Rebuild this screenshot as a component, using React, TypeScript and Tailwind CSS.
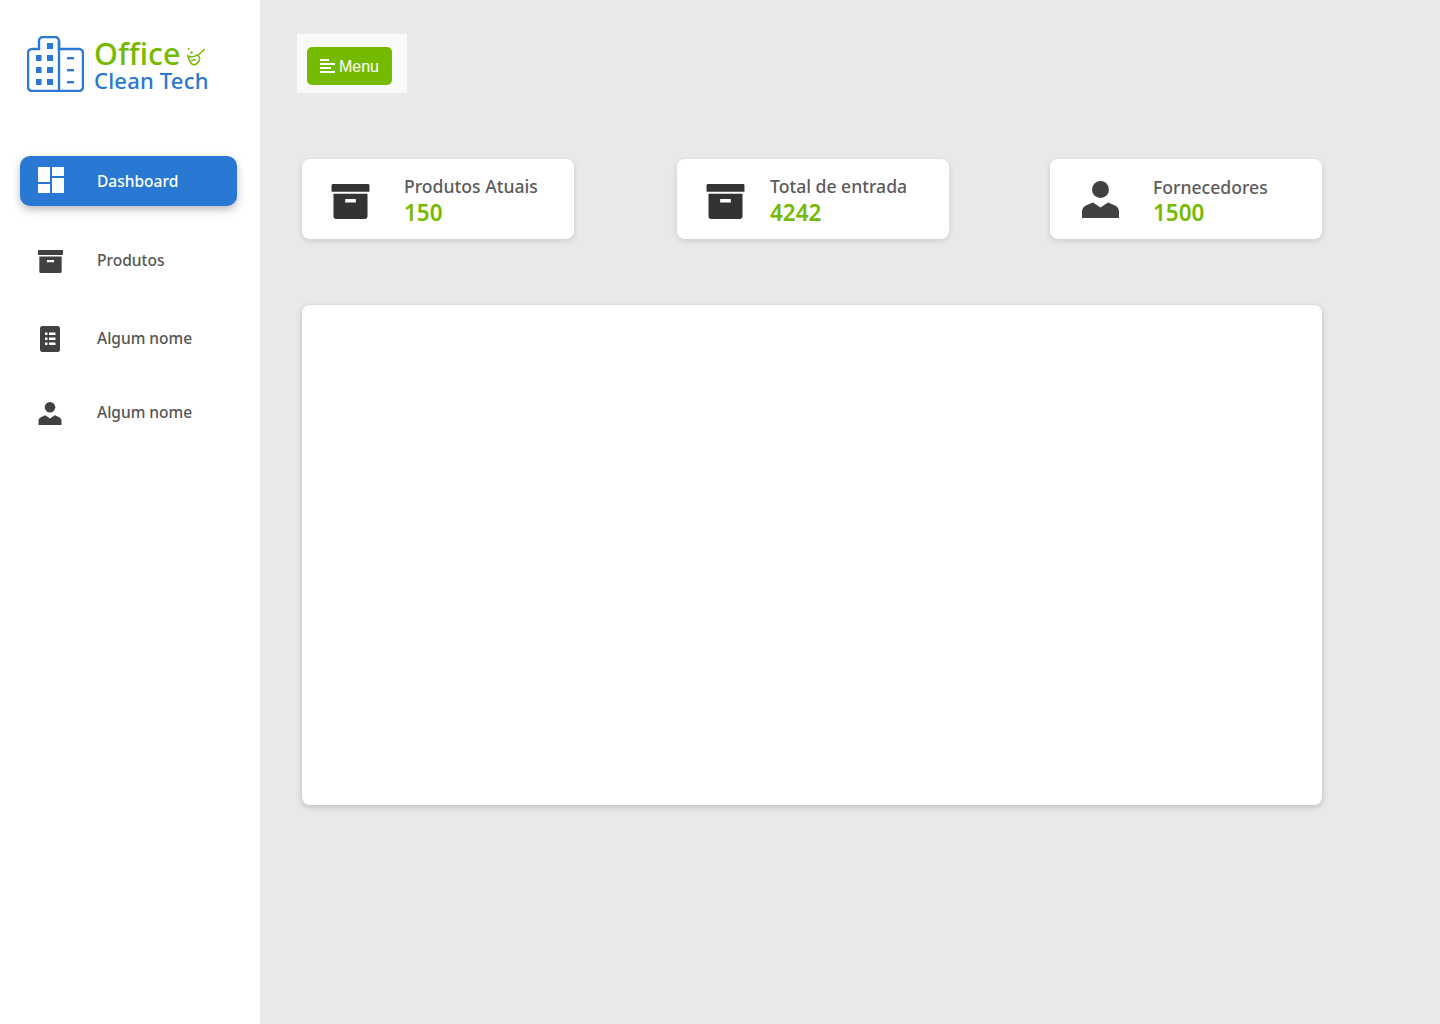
const font = "font-['Noto_Sans','Lato',sans-serif]";

const ArchiveIcon = ({ className }: { className?: string }) => (
    <svg viewBox="0 0 39 36" className={className} fill="currentColor">
        <path d="M0 1.500C0 .7.7 0 1.500 0h36c.8 0 1.500.7 1.500 1.500V8H0z" />
        <path d="M2 10h35v23.500a2.500 2.500 0 0 1-2.500 2.500h-30A2.500 2.500 0 0 1 2 33.500zm12 5.500v3.500h11v-3.500z" fillRule="evenodd" />
    </svg>
);

const PersonIcon = ({ className }: { className?: string }) => (
    <svg viewBox="0 0 37 37" className={className} fill="currentColor">
        <circle cx="18.500" cy="8.500" r="8.500" />
        <path d="M0 37v-6.500c0-3 1.700-5 4.500-6.300L11 21.500l7.500 5 7.500-5 6.500 2.700c2.800 1.300 4.500 3.300 4.500 6.300V37z" />
    </svg>
);

const DashboardIcon = () => (
    <svg width="26" height="26" viewBox="0 0 26 26" fill="white">
        <rect x="0" y="0" width="12" height="15" />
        <rect x="14" y="0" width="12" height="9" />
        <rect x="0" y="17" width="12" height="9" />
        <rect x="14" y="11" width="12" height="15" />
    </svg>
);

const ListIcon = () => (
    <svg width="20" height="26" viewBox="0 0 20 26">
        <rect width="20" height="26" rx="2.500" fill="#414141" />
        <g fill="white">
            <rect x="5" y="6.500" width="2.500" height="2.500" />
            <rect x="9" y="6.500" width="6.500" height="2.500" />
            <rect x="5" y="11.500" width="2.500" height="2.500" />
            <rect x="9" y="11.500" width="6.500" height="2.500" />
            <rect x="5" y="16.500" width="2.500" height="2.500" />
            <rect x="9" y="16.500" width="6.500" height="2.500" />
        </g>
    </svg>
);

const Logo = () => (
    <div className="flex items-start pl-[27px] pt-[36px] h-[156px]">
        <svg width="57" height="56" viewBox="0 0 57 56" fill="none" stroke="#2878d4" strokeWidth="2.400">
            <path d="M5 55a4 4 0 0 1-4-4V17a4 4 0 0 1 4-4h7V5a4 4 0 0 1 4-4h12a4 4 0 0 1 4 4v8h20a4 4 0 0 1 4 4v34a4 4 0 0 1-4 4z" />
            <path d="M32 5v50" />
            <g fill="#2878d4" stroke="none">
                <rect x="20" y="7" width="6" height="6" />
                <rect x="9" y="19" width="5.500" height="6" />
                <rect x="20" y="19" width="6" height="6" />
                <rect x="9" y="31" width="5.500" height="6" />
                <rect x="20" y="31" width="6" height="6" />
                <rect x="9" y="43" width="5.500" height="6" />
                <rect x="20" y="43" width="6" height="6" />
                <rect x="40" y="21" width="7" height="2.400" />
                <rect x="40" y="33" width="7" height="2.400" />
                <rect x="40" y="45" width="7" height="2.400" />
            </g>
        </svg>
        <div className="ml-[10px] mt-[1px] flex flex-col">
            <div className="flex items-center h-[32px]">
                <span className="text-[30.500px] leading-[32px] font-medium text-[#76ba00] [font-variant-ligatures:none]">Office</span>
                <svg width="20" height="20" viewBox="0 0 20 20" className="ml-[6px] mt-[8px]" fill="none" stroke="#76ba00" strokeWidth="1.500">
                    <path d="M18.500 2l-6 6" />
                    <path d="M2 9c3 1.500 7 1 9-1 2.500 1 3.500 3.500 2 6-1.500 2.500-4 4-6 3.500C5 17 3 13 2 9z" />
                    <path d="M5 13.500l5-1" />
                    <circle cx="2.500" cy="2" r="1" fill="#76ba00" stroke="none" />
                    <circle cx="5.500" cy="5.500" r="1.200" fill="#76ba00" stroke="none" />
                </svg>
            </div>
            <span className="text-[22px] leading-[22px] font-medium tracking-[0.2px] text-[#2878d4]">Clean Tech</span>
        </div>
    </div>
);

const NavItem = ({ icon, label, className }: { icon: React.ReactNode; label: string; className?: string }) => (
    <div className={`flex items-center mx-[20px] ${className ?? ""}`}>
        <div className="w-[77px] flex justify-center pr-[18px]">{icon}</div>
        <span className="text-[15.500px] font-medium text-[#555555]">{label}</span>
    </div>
);

const StatCard = ({ icon, title, value, textLeft, titleClass, className }: { icon: React.ReactNode; title: string; value: string; textLeft: string; titleClass?: string; className?: string }) => (
    <div className={`w-[272px] h-[80px] rounded-[8px] bg-white shadow-[0_2px_6px_rgba(0,0,0,0.12)] flex items-center ${className ?? ""}`}>
        <div className={`${textLeft} flex items-center shrink-0`}>{icon}</div>
        <div className="flex flex-col pt-[1px]">
            <span className={`text-[17.600px] leading-[26px] font-medium text-[#5b5b5b] ${titleClass ?? ""}`}>{title}</span>
            <span className="text-[22.500px] leading-[26px] mt-[1px] font-semibold text-[#76ba00]">{value}</span>
        </div>
    </div>
);

const App = () => {
    return (
        <div className={`flex w-full h-[1024px] bg-[#e9e9e9] overflow-hidden ${font}`}>
            <aside className="w-[260px] h-full bg-white shrink-0">
                <Logo />
                <div className="flex items-center h-[50px] w-[217px] ml-[20px] rounded-[10px] bg-[#2878d4] shadow-[0_4px_8px_rgba(0,0,0,0.25)]">
                    <div className="w-[77px] flex justify-center pr-[15px] pb-[2px]">
                        <DashboardIcon />
                    </div>
                    <span className="text-[15.500px] mt-[2px] font-medium text-white">Dashboard</span>
                </div>
                <NavItem className="h-[24px] mt-[43px]" label="Produtos" icon={<ArchiveIcon className="w-[25px] h-[23px] ml-[2px] text-[#414141]" />} />
                <NavItem className="h-[26px] mt-[53px]" label="Algum nome" icon={<ListIcon />} />
                <NavItem className="h-[24px] mt-[49px]" label="Algum nome" icon={<PersonIcon className="w-[24px] h-[23px] text-[#414141]" />} />
            </aside>
            <main className="flex-1 pt-[34px]">
                <div className="ml-[37px] w-[110px] h-[59px] bg-[#f8f9fa] pl-[10px] pt-[13px]">
                    <button className="flex items-center justify-center w-[85px] h-[38px] rounded-[5px] bg-[#76ba00] text-white text-[16px] font-['Liberation_Sans',sans-serif]">
                        <svg width="15" height="14" viewBox="0 0 15 14" fill="white" className="mr-[4px]">
                            <rect x="0" y="0" width="9" height="2" />
                            <rect x="0" y="4" width="15" height="2" />
                            <rect x="0" y="8" width="11" height="2" />
                            <rect x="0" y="12" width="15" height="2" />
                        </svg>
                        <span className="mt-[1px]">Menu</span>
                    </button>
                </div>
                <div className="flex ml-[42px] mt-[66px]">
                    <StatCard title="Produtos Atuais" value="150" textLeft="w-[102px] pl-[29px] pt-[4px]" icon={<ArchiveIcon className="w-[39px] h-[35px] text-[#333333]" />} />
                    <StatCard className="ml-[103px]" title="Total de entrada" value="4242" textLeft="w-[93px] pl-[29px] pt-[4px]" icon={<ArchiveIcon className="w-[39px] h-[35px] text-[#333333]" />} />
                    <StatCard className="ml-[101px]" titleClass="mt-[1px] -mb-[1px]" title="Fornecedores" value="1500" textLeft="w-[103px] pl-[32px]" icon={<PersonIcon className="w-[37px] h-[37px] text-[#414141]" />} />
                </div>
                <div className="ml-[42px] mt-[66px] w-[1020px] h-[500px] rounded-[8px] bg-white shadow-[0_2px_6px_rgba(0,0,0,0.2)]" />
            </main>
        </div>
    );
};

export default App;
